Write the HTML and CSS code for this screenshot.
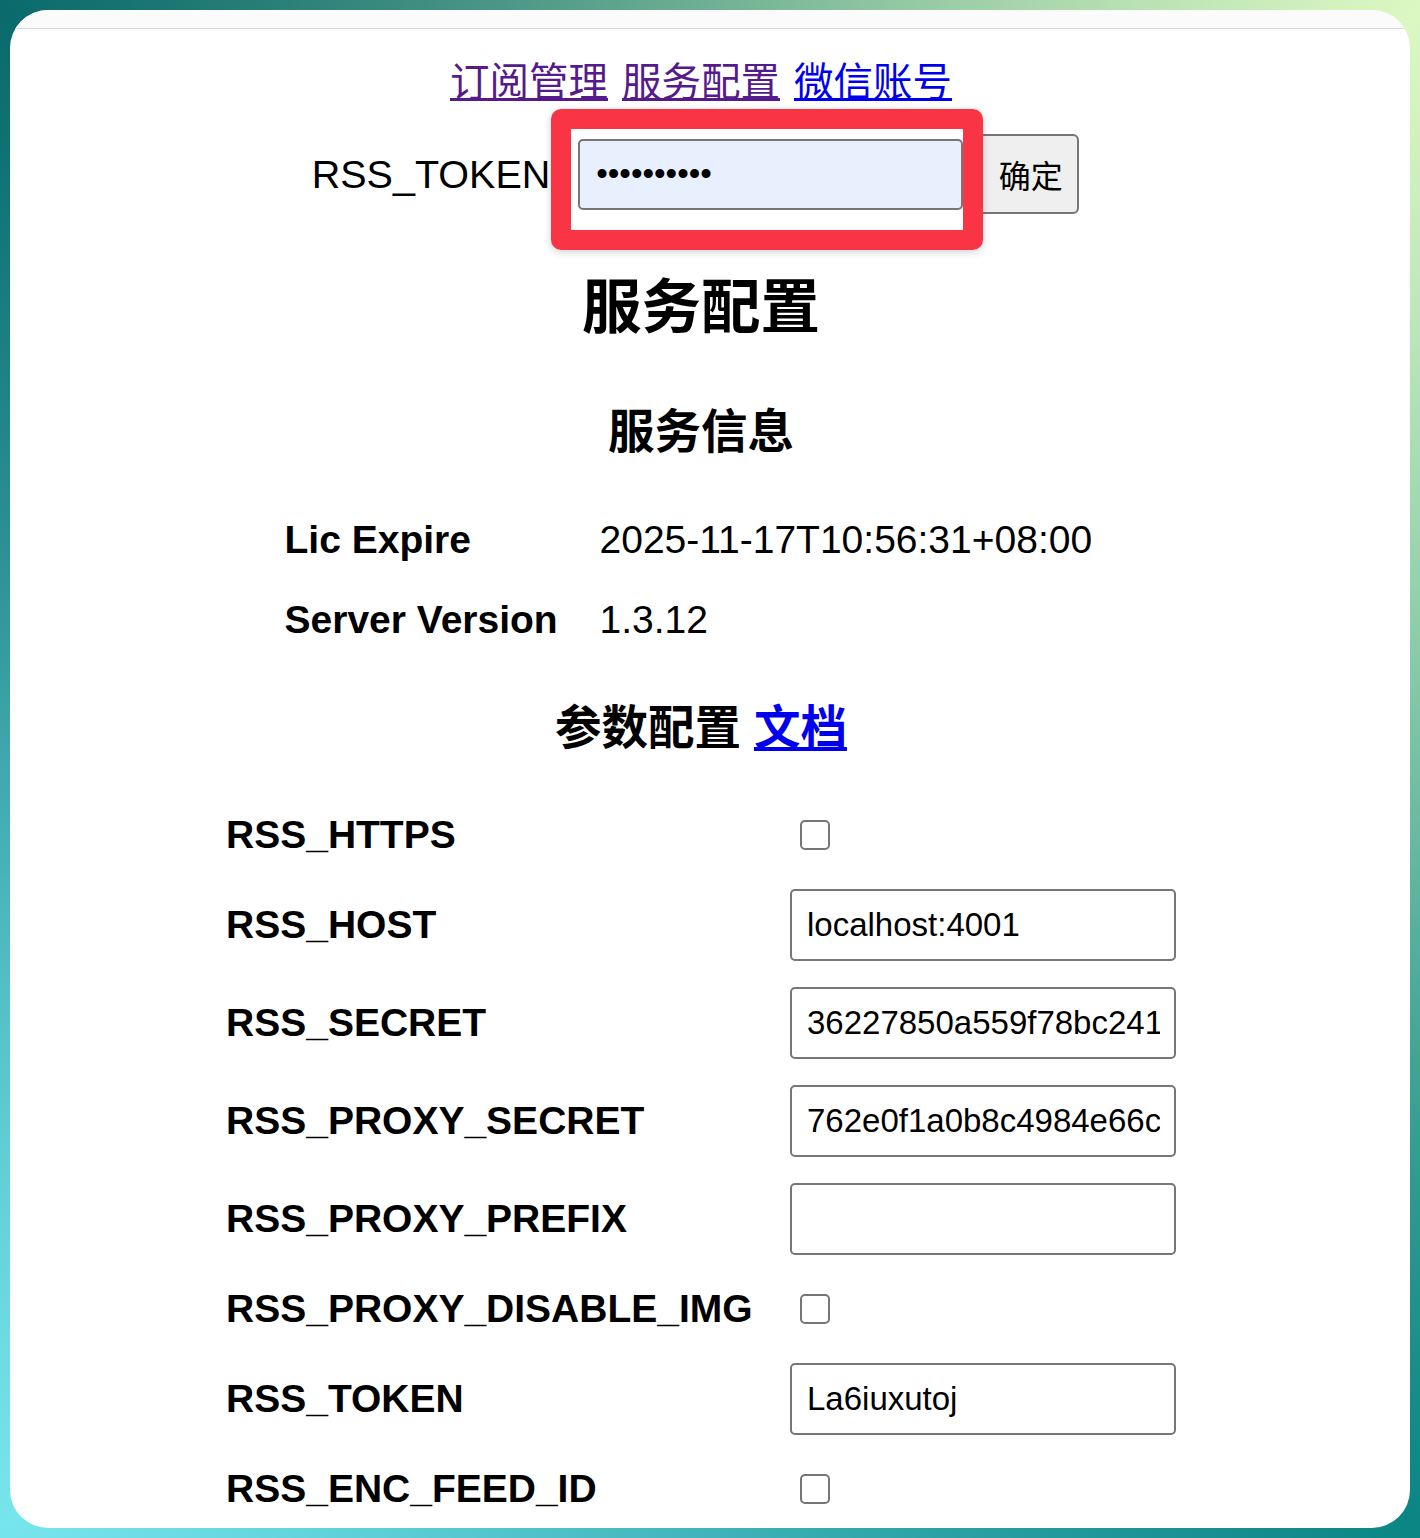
FILE: index.html
```html
<!DOCTYPE html>
<html lang="zh-CN">
<head>
<meta charset="utf-8">
<title>服务配置</title>
<link rel="stylesheet" href="styles.css">
</head>
<body>
<div class="frame">
  <div class="card">
    <div class="topbar"></div>
    <div class="page">
      <nav class="nav">
        <a href="#sub" class="visited">订阅管理</a>
        <a href="#svc" class="visited">服务配置</a>
        <a href="#wx" class="fresh">微信账号</a>
      </nav>
      <div class="token-row">
        <label class="token-label" for="tok">RSS_TOKEN</label>
        <span class="token-field">
          <input id="tok" class="token-input" type="password" value="La6iuxutoj">
          <span class="annot"></span>
        </span>
        <button class="ok-btn" type="button">确定</button>
      </div>
      <h2 class="title">服务配置</h2>
      <h3 class="sub sub-info">服务信息</h3>
      <table class="info">
        <tr><th>Lic Expire</th><td>2025-11-17T10:56:31+08:00</td></tr>
        <tr><th>Server Version</th><td>1.3.12</td></tr>
      </table>
      <h3 class="sub sub-cfg">参数配置 <a href="#doc" class="fresh">文档</a></h3>
      <table class="cfg">
        <tr class="chk"><th>RSS_HTTPS</th><td><input class="box" type="checkbox"></td></tr>
        <tr class="txt"><th>RSS_HOST</th><td><input class="field" type="text" value="localhost:4001"></td></tr>
        <tr class="txt"><th>RSS_SECRET</th><td><input class="field" type="text" value="36227850a559f78bc2415d0e7a9c3b18"></td></tr>
        <tr class="txt"><th>RSS_PROXY_SECRET</th><td><input class="field" type="text" value="762e0f1a0b8c4984e66c0d2f91ab57e3"></td></tr>
        <tr class="txt"><th>RSS_PROXY_PREFIX</th><td><input class="field" type="text" value=""></td></tr>
        <tr class="chk"><th>RSS_PROXY_DISABLE_IMG</th><td><input class="box" type="checkbox"></td></tr>
        <tr class="txt"><th>RSS_TOKEN</th><td><input class="field" type="text" value="La6iuxutoj"></td></tr>
        <tr class="chk"><th>RSS_ENC_FEED_ID</th><td><input class="box" type="checkbox"></td></tr>
      </table>
    </div>
  </div>
</div>
</body>
</html>
```
FILE: styles.css
```css
* { box-sizing: border-box; }
html, body { margin: 0; padding: 0; }
body {
  font-family: "Liberation Sans", "Noto Sans CJK SC", sans-serif;
  color: #000;
}
.frame {
  height: 1538px;
  padding: 10px;
  overflow: hidden;
  background: conic-gradient(from 0deg at 50% 50%,
    #6fb094 0deg,
    #dcf8c2 43deg,
    #74c0a4 90deg,
    #0c8585 137deg,
    #40b4b8 180deg,
    #76e5ec 223deg,
    #40a8ae 270deg,
    #0a6a6c 317deg,
    #6fb094 360deg);
}
.card {
  height: 1518px;
  background: #fff;
  border-radius: 38px;
  overflow: hidden;
}
.topbar {
  height: 19px;
  background: #fbfbfb;
  border-bottom: 1px solid #dcdcdc;
}
.page {
  padding: 0 37px 0 19px;
  font-size: 39px;
}
.nav {
  margin-top: 25px;
  font-size: 39.5px;
  line-height: 56px;
  word-spacing: 3px;
  text-align: center;
}
.nav a, .sub a { text-decoration: underline; }
a.visited { color: #551a8b; }
a.fresh { color: #0000ee; }

.token-row {
  margin-top: 24px;
  height: 80px;
  display: flex;
  justify-content: center;
  align-items: center;
  padding-right: 11px;
}
.token-label { margin-right: 28px; font-size: 39.5px; }
.token-field { position: relative; display: block; height: 71px; }
.token-input {
  display: block;
  width: 385px;
  height: 71px;
  margin: 0;
  border: 2px solid #767676;
  border-radius: 5px;
  background: #e8f0fe;
  padding: 0 14px 0 16px;
  font-family: "Liberation Sans", sans-serif;
  font-size: 33px;
  color: #000;
}
.annot {
  position: absolute;
  left: -27px;
  top: -30px;
  width: 432px;
  height: 141px;
  border: 20px solid #f93444;
  border-radius: 10px;
  box-shadow: 0 2px 8px rgba(0, 0, 0, 0.18);
  pointer-events: none;
}
.ok-btn {
  margin-left: 11px;
  width: 105px;
  height: 80px;
  padding: 0 0 0 8px;
  background: #efefef;
  border: 2px solid #767676;
  border-radius: 6px;
  font-family: "Liberation Sans", "Noto Sans CJK SC", sans-serif;
  font-size: 32px;
  color: #000;
}

.title {
  margin: 59px 0 0;
  font-size: 59.5px;
  line-height: 69px;
  text-align: center;
  font-weight: bold;
}
.sub {
  margin: 0;
  font-size: 46.5px;
  line-height: 54px;
  text-align: center;
  font-weight: bold;
}
.sub-info { margin-top: 63px; }
.sub-cfg { margin-top: 41px; }

.info {
  margin: 41px auto 0;
  width: 833px;
  border-collapse: collapse;
}
.info th {
  width: 315px;
  height: 80px;
  padding: 0;
  text-align: left;
  font-weight: bold;
}
.info td { padding: 0; }

.cfg {
  margin: 39px auto 0;
  width: 950px;
  border-collapse: collapse;
}
.cfg th {
  width: 564px;
  padding: 0;
  text-align: left;
  font-weight: bold;
}
.cfg td { padding: 0; vertical-align: middle; }
.cfg tr.chk th { height: 82px; }
.cfg tr.txt th { height: 98px; }
.field {
  display: block;
  width: 386px;
  height: 72px;
  margin: 0;
  border: 2px solid #767676;
  border-radius: 5px;
  background: #fff;
  padding: 0 14px 0 15px;
  font-family: "Liberation Sans", sans-serif;
  font-size: 33px;
  color: #000;
}
.box {
  -webkit-appearance: none;
  appearance: none;
  display: block;
  width: 30px;
  height: 30px;
  margin: 0 0 0 10px;
  border: 2px solid #767676;
  border-radius: 5px;
  background: #fff;
}
```
